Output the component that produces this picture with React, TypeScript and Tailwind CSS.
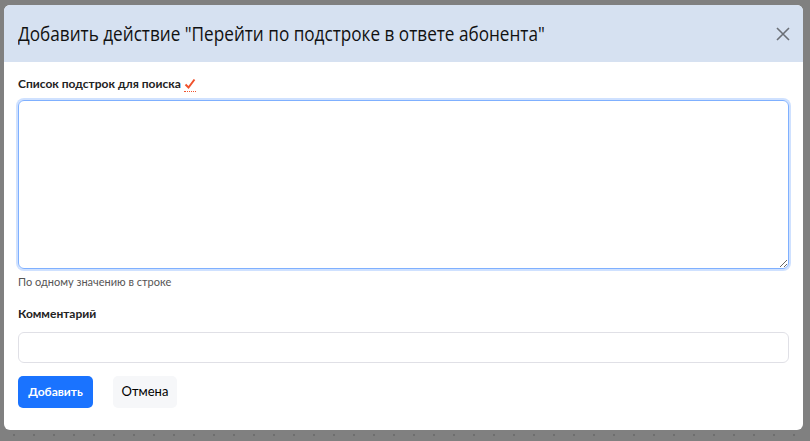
import React from "react";

export default function App() {
  const dots = Array.from({ length: 41 });
  return (
    <div className="relative w-[810px] h-[441px] bg-[#808080] overflow-hidden" style={{ fontFamily: "Lato, Inter, 'Noto Sans', sans-serif" }}>
      <div className="absolute left-0 right-0 top-[434px] flex pl-[13px] gap-[18px]">
        {dots.map((_, i) => (
          <div key={i} className="w-[2px] h-[2px] bg-[#6e6e6e] shrink-0" />
        ))}
      </div>
      <div className="absolute left-[4px] top-[5px] w-[799px] h-[425px] bg-white rounded-[6px] overflow-hidden flex flex-col">
        <div className="h-[57px] bg-[#d6e1f1] flex items-center justify-between pl-[14px] pr-[12px]">
          <div className="text-[20px] text-[#111] whitespace-nowrap origin-left scale-x-[0.858]" style={{ fontFamily: "'Open Sans', sans-serif" }}>
            Добавить действие "Перейти по подстроке в ответе абонента"
          </div>
          <svg width="16" height="16" viewBox="0 0 16 16">
            <path d="M2 2 L14 14 M14 2 L2 14" stroke="#6b6f76" strokeWidth="1.6" fill="none" />
          </svg>
        </div>
        <div className="flex flex-col px-[14px] pt-[14px]">
          <div className="flex items-center text-[12px] font-bold text-[#222] h-[16px]">
            Список подстрок для поиска
            <span className="ml-[3px] relative inline-flex">
              <svg width="12" height="12" viewBox="0 0 12 12">
                <path d="M1.5 6.5 L4.5 9.5 L10.5 1.5" stroke="#f0522d" strokeWidth="2" fill="none" />
              </svg>
              <span className="absolute left-0 right-0 -bottom-[2px] border-b border-dotted border-[#f0522d]" />
            </span>
          </div>
          <textarea className="mt-[8px] h-[169px] w-full rounded-[6px] border border-[#7fb0ff] outline-none shadow-[0_0_0_2px_#cfe1ff] resize-y" />
          <div className="mt-[5px] text-[11px] text-[#555]">По одному значению в строке</div>
          <div className="mt-[14px] text-[12px] font-bold text-[#222]">Комментарий</div>
          <input className="mt-[9px] h-[31px] w-full rounded-[6px] border border-[#e0e0e6] outline-none" />
          <div className="mt-[13px] flex gap-[20px]">
            <button className="h-[32px] w-[75px] rounded-[5px] bg-[#1a73ff] text-white text-[12px] font-bold">Добавить</button>
            <button className="h-[32px] w-[64px] rounded-[5px] bg-[#f6f7f9] text-black text-[13px]">Отмена</button>
          </div>
        </div>
      </div>
    </div>
  );
}
